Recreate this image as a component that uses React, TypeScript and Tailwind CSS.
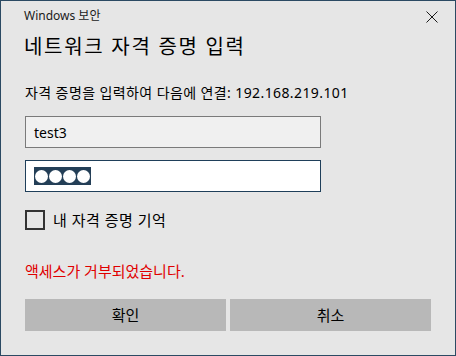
import React from "react";

const F = { fontFamily: '"Noto Sans", "Noto Sans CJK KR", sans-serif' };

export default function App() {
  return (
    <div
      className="w-[456px] h-[356px] border border-[#2b4a63] bg-[#e6e6e6] flex flex-col text-[#000]"
      style={F}
    >
      <div className="flex items-start justify-between h-[32px]">
        <div className="pl-[23px] pt-[7px] text-[12px] leading-[16px] text-[#1a1a1a]">Windows 보안</div>
        <div className="pr-[17px] pt-[10px]">
          <svg width="12" height="12" viewBox="0 0 12 12">
            <path d="M0.5 0.5 L11.5 11.5 M11.5 0.5 L0.5 11.5" stroke="#1a1a1a" strokeWidth="1" />
          </svg>
        </div>
      </div>
      <div className="pl-[23px] text-[20px] leading-[28px] tracking-[1.7px] text-[#000]">네트워크 자격 증명 입력</div>
      <div className="pl-[24px] mt-[22px] text-[14px] leading-[20px] tracking-[0.4px] text-[#000]">
        자격 증명을 입력하여 다음에 연결: 192.168.219.101
      </div>
      <div className="pl-[24px] mt-[13px] flex flex-col gap-[12px]">
        <div className="w-[296px] h-[32px] border border-[#7a7a7a] bg-[#f0f0f0] flex items-center pl-[8px] text-[14px]">
          test3
        </div>
        <div className="w-[296px] h-[32px] border border-[#1f3f5a] bg-white flex items-center pl-[8px]">
          <div className="h-[18px] bg-[#243f57] flex items-center gap-[1px] px-[1px]">
            <span className="w-[13px] h-[13px] rounded-full bg-white" />
            <span className="w-[13px] h-[13px] rounded-full bg-white" />
            <span className="w-[13px] h-[13px] rounded-full bg-white" />
            <span className="w-[13px] h-[13px] rounded-full bg-white" />
          </div>
        </div>
      </div>
      <div className="pl-[24px] mt-[18px] flex items-center gap-[8px]">
        <div className="w-[20px] h-[20px] border-2 border-[#333]" />
        <span className="text-[15px] leading-[20px] tracking-[0.5px]">내 자격 증명 기억</span>
      </div>
      <div className="pl-[24px] mt-[31px] text-[15px] leading-[20px] text-[#e00000]">액세스가 거부되었습니다.</div>
      <div className="pl-[24px] mt-[18px] flex gap-[4px]">
        <button className="w-[201px] h-[32px] bg-[#b8b8b8] text-[15px]">확인</button>
        <button className="w-[201px] h-[32px] bg-[#b8b8b8] text-[15px]">취소</button>
      </div>
    </div>
  );
}
